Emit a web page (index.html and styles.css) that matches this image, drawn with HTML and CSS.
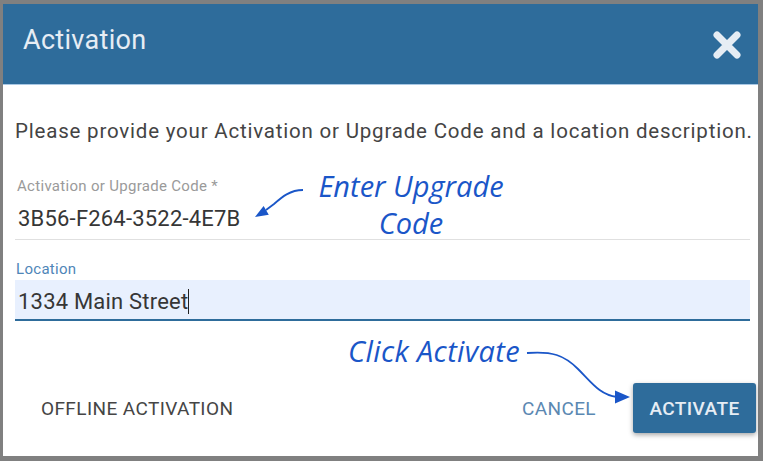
FILE: index.html
```html
<!DOCTYPE html>
<html lang="en">
<head>
    <meta charset="UTF-8">
    <meta name="viewport" content="width=device-width, initial-scale=1.0">
    <title>Activation</title>
    <link rel="stylesheet" href="styles.css">
</head>
<body>
    <div class="dialog">
        <div class="dialog-header">
            <h1>Activation</h1>
            <svg class="close-icon" width="30" height="30" viewBox="0 0 30 30">
                <path d="M5 5 L25 25 M25 5 L5 25" stroke="#e6edf4" stroke-width="7" stroke-linecap="round"/>
            </svg>
        </div>

        <div class="dialog-body">
            <p class="intro">Please provide your Activation or Upgrade Code and a location description.</p>

            <div class="field">
                <label class="field-label">Activation or Upgrade Code *</label>
                <div class="field-value">3B56-F264-3522-4E7B</div>
            </div>

            <div class="field field-active">
                <label class="field-label">Location</label>
                <div class="field-value">1334 Main Street<span class="caret"></span></div>
            </div>
        </div>

        <div class="dialog-actions">
            <button class="btn-text btn-offline">OFFLINE ACTIVATION</button>
            <div class="actions-right">
                <button class="btn-text btn-cancel">CANCEL</button>
                <button class="btn-primary">ACTIVATE</button>
            </div>
        </div>

        <!-- callouts drawn over the dialog -->
        <div class="note note-code">Enter Upgrade<br>Code</div>
        <svg class="arrow arrow-code" width="60" height="40" viewBox="0 0 60 40">
            <path d="M53 5 C40 5 32 12 24 19 L16 25" fill="none" stroke="#1a56c8" stroke-width="1.8"/>
            <path d="M5 32 L13.6 21.1 L18.8 29.7 Z" fill="#1a56c8"/>
        </svg>

        <div class="note note-activate">Click Activate</div>
        <svg class="arrow arrow-activate" width="115" height="65" viewBox="0 0 115 65">
            <path d="M5 10 C30 8 42 12 56 26 C70 40 78 52 95 54" fill="none" stroke="#1a56c8" stroke-width="1.8"/>
            <path d="M108 54 L93 47.5 L93 60.5 Z" fill="#1a56c8"/>
        </svg>
    </div>
</body>
</html>
```

FILE: styles.css
```css
body {
    margin: 0;
    padding: 4px 5px 5px 3px;
    background: #808080;
    font-family: Roboto, "Liberation Sans", sans-serif;
}
.dialog {
    position: relative;
    height: 452px;
    background: #fff;
    display: flex;
    flex-direction: column;
}
.dialog-header {
    height: 60px;
    padding: 20px 16px 0 20px;
    background: #2e6c9b;
    border-bottom: 1px solid #a9c8e4;
    display: flex;
    align-items: flex-start;
    justify-content: space-between;
}
h1 {
    margin: 0;
    font-size: 27px;
    line-height: 32px;
    font-weight: 400;
    letter-spacing: 0.3px;
    color: #e6edf4;
}
.close-icon {
    margin-top: 6px;
}
.dialog-body {
    padding: 34px 8px 0 12px;
}
.intro {
    margin: 0 0 34px;
    font-size: 20.5px;
    line-height: 24px;
    letter-spacing: 0.8px;
    color: #444;
    white-space: nowrap;
}
.field {
    border-bottom: 1px solid #e0e0e0;
    margin-bottom: 20px;
}
.field-label {
    display: block;
    font-size: 15px;
    line-height: 18px;
    letter-spacing: 0.3px;
    color: #9a9a9a;
    padding-left: 2px;
    margin-bottom: 11px;
}
.field-value {
    font-size: 22px;
    line-height: 26px;
    letter-spacing: 0.2px;
    color: #363636;
    padding: 0 0 7px 3px;
}
.field-active {
    border-bottom: 2px solid #2e6c9b;
}
.field-active .field-label {
    color: #4f86b8;
    padding-left: 1px;
    margin-bottom: 2px;
}
.field-active .field-value {
    background: #e8f0fe;
    padding: 9px 0 4px 3px;
}
.caret {
    display: inline-block;
    width: 1px;
    height: 25px;
    background: #222;
    vertical-align: -5px;
}
.dialog-actions {
    margin-top: auto;
    display: flex;
    align-items: center;
    justify-content: space-between;
    padding: 0 2px 23px 32px;
}
.actions-right {
    display: flex;
    align-items: center;
    gap: 31px;
}
button {
    font-family: Roboto, "Liberation Sans", sans-serif;
    font-size: 19px;
    letter-spacing: 0.4px;
    border: none;
    background: none;
    cursor: pointer;
}
.btn-offline {
    color: #454545;
}
.btn-cancel {
    color: #5b88b2;
}
.btn-primary {
    width: 123px;
    height: 50px;
    background: #2e6c9b;
    color: #e6edf4;
    font-weight: 500;
    border-radius: 3px;
    box-shadow: 0 2px 5px rgba(0, 0, 0, 0.35);
}
.note {
    position: absolute;
    font-family: "Open Sans", "Noto Sans", sans-serif;
    font-style: italic;
    font-size: 29px;
    line-height: 37px;
    color: #1a56c8;
    text-align: center;
}
.note-code {
    left: 308px;
    top: 163px;
    width: 200px;
}
.note-activate {
    left: 345px;
    top: 328px;
    letter-spacing: 0.4px;
}
.arrow {
    position: absolute;
}
.arrow-code {
    left: 247px;
    top: 181px;
}
.arrow-activate {
    left: 519px;
    top: 339px;
}
```
